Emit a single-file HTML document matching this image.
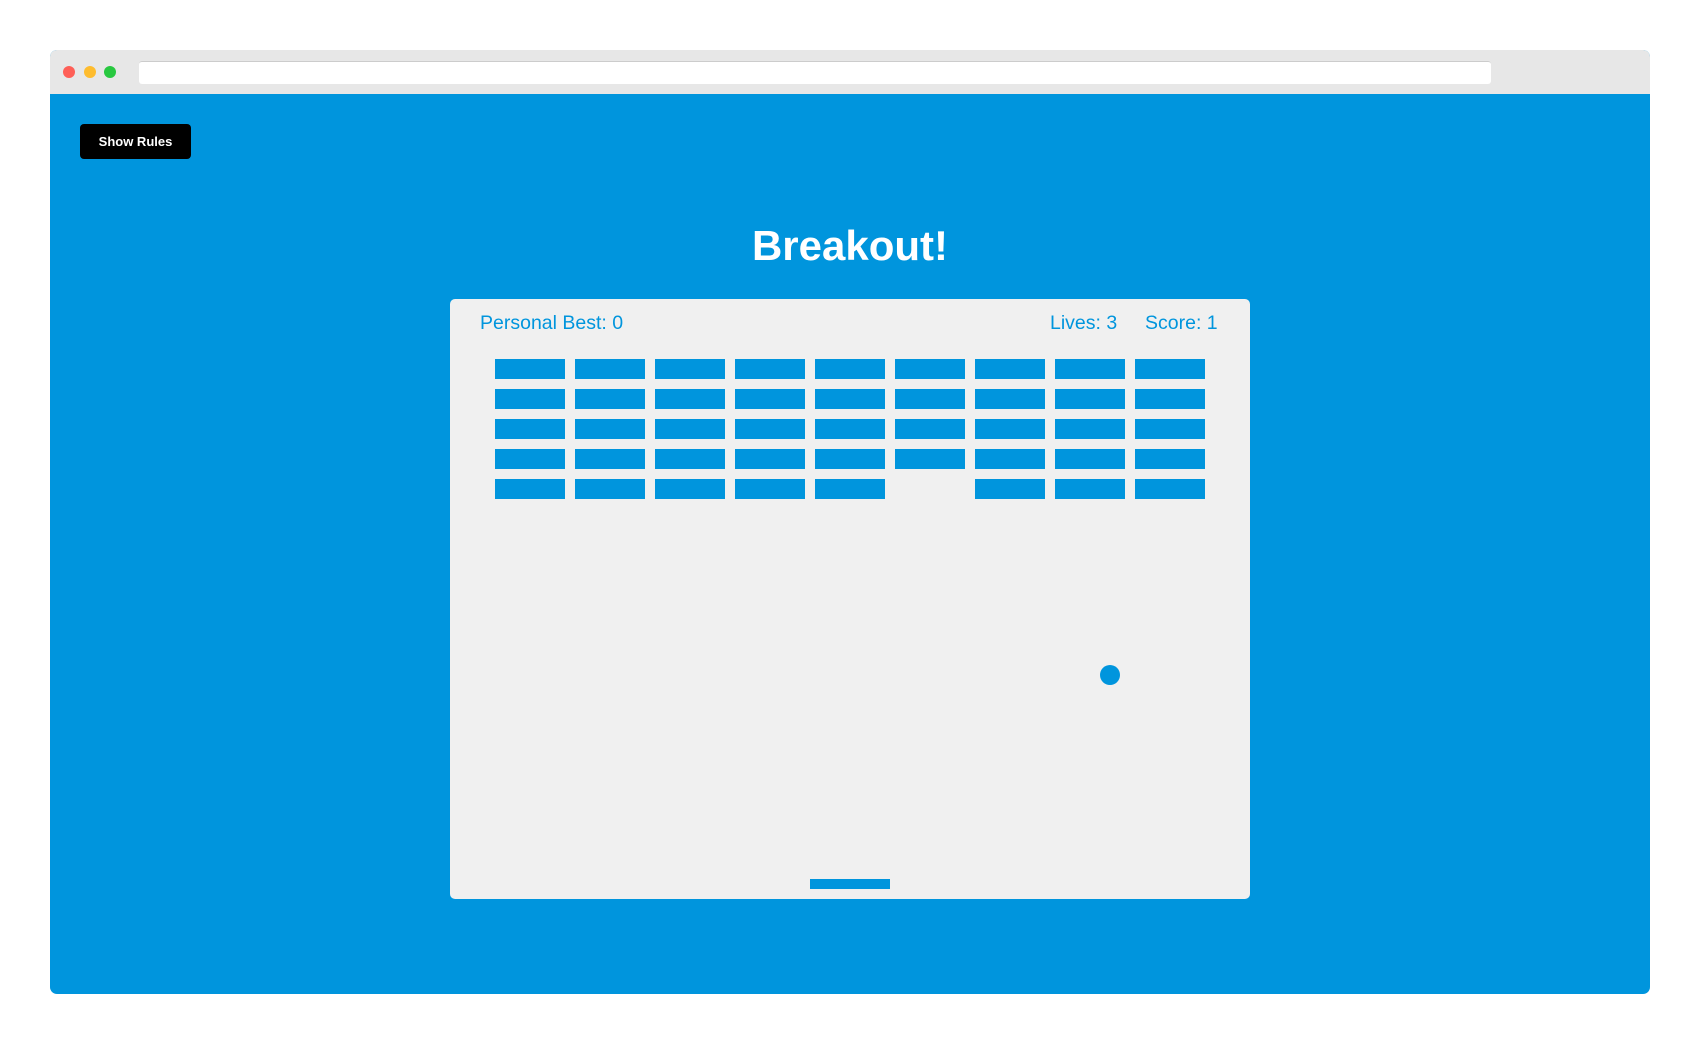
<!DOCTYPE html>
<html><head><style>
html,body{margin:0;padding:0;background:#fff;width:1700px;height:1044px;overflow:hidden;font-family:"Liberation Sans",sans-serif}
.frame{position:absolute;left:50px;top:50px;width:1600px;height:944px;background:#0095dd;border-radius:7px;overflow:hidden}
.bar{position:absolute;left:0;top:0;width:100%;height:44px;background:#e7e7e7}
.dot{position:absolute;top:16px;width:12px;height:12px;border-radius:50%}
.addr{position:absolute;left:89px;top:11px;width:1352px;height:23px;background:#fff;border-radius:3px;border-top:1px solid #ccc;box-sizing:border-box}
.btn{position:absolute;left:30px;top:74px;width:111px;height:35px;background:#000;border-radius:4px;color:#fff;font-size:13px;font-weight:bold;line-height:35px;text-align:center}
h1{position:absolute;left:0;width:100%;top:172px;margin:0;text-align:center;color:#fff;font-size:42px;font-weight:bold}
.canvas{position:absolute;left:400px;top:249px;width:800px;height:600px;background:#f0f0f0;border-radius:5px}
.t{position:absolute;top:13px;color:#0095dd;font-size:19.5px}
.b{position:absolute;width:70px;height:20px;background:#0095dd}
</style></head><body>
<div class="frame">
<div class="bar">
<div class="dot" style="left:13px;background:#fe5f57"></div>
<div class="dot" style="left:34px;background:#febc2e"></div>
<div class="dot" style="left:54px;background:#28c840"></div>
<div class="addr"></div>
</div>
<div class="btn">Show Rules</div>
<h1>Breakout!</h1>
<div class="canvas">
<div class="t" style="left:30px">Personal Best: 0</div>
<div class="t" style="left:600px">Lives: 3</div>
<div class="t" style="left:695px">Score: 1</div>
<svg width="800" height="600" style="position:absolute;left:0;top:0">
<g fill="#0095dd">
<rect x="45" y="60" width="70" height="20"/><rect x="125" y="60" width="70" height="20"/><rect x="205" y="60" width="70" height="20"/><rect x="285" y="60" width="70" height="20"/><rect x="365" y="60" width="70" height="20"/><rect x="445" y="60" width="70" height="20"/><rect x="525" y="60" width="70" height="20"/><rect x="605" y="60" width="70" height="20"/><rect x="685" y="60" width="70" height="20"/>
<rect x="45" y="90" width="70" height="20"/><rect x="125" y="90" width="70" height="20"/><rect x="205" y="90" width="70" height="20"/><rect x="285" y="90" width="70" height="20"/><rect x="365" y="90" width="70" height="20"/><rect x="445" y="90" width="70" height="20"/><rect x="525" y="90" width="70" height="20"/><rect x="605" y="90" width="70" height="20"/><rect x="685" y="90" width="70" height="20"/>
<rect x="45" y="120" width="70" height="20"/><rect x="125" y="120" width="70" height="20"/><rect x="205" y="120" width="70" height="20"/><rect x="285" y="120" width="70" height="20"/><rect x="365" y="120" width="70" height="20"/><rect x="445" y="120" width="70" height="20"/><rect x="525" y="120" width="70" height="20"/><rect x="605" y="120" width="70" height="20"/><rect x="685" y="120" width="70" height="20"/>
<rect x="45" y="150" width="70" height="20"/><rect x="125" y="150" width="70" height="20"/><rect x="205" y="150" width="70" height="20"/><rect x="285" y="150" width="70" height="20"/><rect x="365" y="150" width="70" height="20"/><rect x="445" y="150" width="70" height="20"/><rect x="525" y="150" width="70" height="20"/><rect x="605" y="150" width="70" height="20"/><rect x="685" y="150" width="70" height="20"/>
<rect x="45" y="180" width="70" height="20"/><rect x="125" y="180" width="70" height="20"/><rect x="205" y="180" width="70" height="20"/><rect x="285" y="180" width="70" height="20"/><rect x="365" y="180" width="70" height="20"/><rect x="525" y="180" width="70" height="20"/><rect x="605" y="180" width="70" height="20"/><rect x="685" y="180" width="70" height="20"/>
<circle cx="660" cy="376" r="10"/>
<rect x="360" y="580" width="80" height="10"/>
</g></svg>
</div>
</div>
</body></html>
